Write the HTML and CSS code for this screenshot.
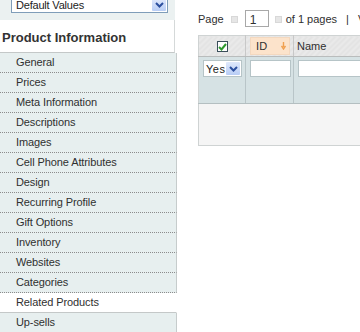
FILE: index.html
```html
<!DOCTYPE html>
<html lang="en">
<head>
  <meta charset="UTF-8" />
  <meta name="viewport" content="width=device-width, initial-scale=1" />
  <title>Related Products</title>
  <link rel="stylesheet" href="styles.css">
</head>
<body>

<div class="page">
  <div class="side-col">
    <div class="store-switcher">
      <div class="select-box wide">
        <span class="select-text">Default Values</span>
        <span class="select-btn"><svg width="9" height="6" viewBox="0 0 9 6"><path d="M1 1 L4.5 4.5 L8 1" fill="none" stroke="#2c4f9e" stroke-width="2"/></svg></span>
      </div>
    </div>

    <h3 class="tabs-title">Product Information</h3>

    <ul class="tabs">
      <li><a href="#">General</a></li>
      <li><a href="#">Prices</a></li>
      <li><a href="#">Meta Information</a></li>
      <li><a href="#">Descriptions</a></li>
      <li><a href="#">Images</a></li>
      <li><a href="#">Cell Phone Attributes</a></li>
      <li><a href="#">Design</a></li>
      <li><a href="#">Recurring Profile</a></li>
      <li><a href="#">Gift Options</a></li>
      <li><a href="#">Inventory</a></li>
      <li><a href="#">Websites</a></li>
      <li><a href="#">Categories</a></li>
      <li><a href="#" class="active">Related Products</a></li>
      <li><a href="#">Up-sells</a></li>
    </ul>
  </div>

  <div class="main-col">
    <div class="pager">
      <span>Page</span>
      <span class="pager-arrow first"></span>
      <span class="pager-input">1</span>
      <span class="pager-arrow"></span>
      <span class="pages">of 1 pages</span>
      <span class="sep">|</span>
      <span class="sep">View</span>
    </div>

    <table class="grid">
      <colgroup>
        <col class="col-check">
        <col class="col-id">
        <col class="col-name">
      </colgroup>
      <tr class="headings">
        <th class="center">
          <span class="check-box"><svg width="9" height="8" viewBox="0 0 9 8"><path d="M1 4 L3.5 6.5 L8 1" fill="none" stroke="#2e9a2e" stroke-width="2"/></svg></span>
        </th>
        <th>
          <span class="sort-cell">ID <svg class="sort-arrow" width="5" height="8" viewBox="0 0 5 8"><path d="M2.5 0 V5 M0.5 4 L2.5 7 L4.5 4" fill="none" stroke="#f0a050" stroke-width="1.4"/></svg></span>
        </th>
        <th><span class="head-text">Name</span></th>
      </tr>
      <tr class="filter">
        <td>
          <div class="select-box small">
            <span class="select-text">Yes</span>
            <span class="select-btn"><svg width="9" height="6" viewBox="0 0 9 6"><path d="M1 1 L4.5 4.5 L8 1" fill="none" stroke="#2c4f9e" stroke-width="2"/></svg></span>
          </div>
        </td>
        <td><span class="input-text"></span></td>
        <td><span class="input-text name"></span></td>
      </tr>
      <tr class="empty">
        <td colspan="3"></td>
      </tr>
    </table>
  </div>
</div>

</body>
</html>
```

FILE: styles.css
```css
body {
  margin: 0;
  font-family: "Liberation Sans", Arial, sans-serif;
  font-size: 11px;
  color: #2f2f2f;
  background: #fff;
}
.page {
  display: flex;
  width: 360px;
  height: 332px;
  overflow: hidden;
}
.side-col {
  flex: none;
  width: 177px;
}
.store-switcher {
  height: 20px;
  width: 175px;
  background: #ebf1f1;
  overflow: hidden;
}
.select-box {
  display: flex;
  align-items: center;
  background: #fff;
  border: 1px solid #7f9db9;
  box-sizing: border-box;
}
.select-box.wide {
  width: 157px;
  height: 16px;
  margin: -3px 0 0 11px;
}
.select-text {
  flex: 1;
  padding-left: 4px;
  font-size: 11px;
  color: #222;
}
.select-box.wide .select-text {
  letter-spacing: -0.2px;
}
.select-btn {
  display: flex;
  align-items: center;
  justify-content: center;
  width: 14px;
  align-self: stretch;
  margin: 1px;
  background: linear-gradient(#dfe8fb, #b8cdf5);
  border-radius: 1px;
}
.tabs-title {
  margin: 0;
  width: 175px;
  height: 33px;
  box-sizing: border-box;
  padding: 10px 0 0 2px;
  font-size: 13px;
  font-weight: bold;
  color: #333;
  border-right: 1px solid #d5d9d9;
  border-bottom: 1px solid #c4c8c8;
}
.tabs {
  list-style: none;
  margin: 0;
  padding: 0;
}
.tabs a {
  display: block;
  height: 19px;
  line-height: 19px;
  padding-left: 16px;
  background: #e7efef;
  border-bottom: 1px dotted #8c8c8c;
  border-right: 1px solid #c6cccc;
  color: #2f2f2f;
  text-decoration: none;
  font-size: 11px;
  letter-spacing: -0.1px;
}
.tabs a.active {
  background: #fff;
  border-right-color: #fff;
  border-bottom: 1px solid #c4c8c8;
}
.main-col {
  flex: 1;
  min-width: 0;
  overflow: hidden;
  padding: 10px 0 0 21px;
}
.pager {
  display: flex;
  align-items: center;
  height: 17px;
  white-space: nowrap;
}
.pager > span {
  flex: none;
}
.pager-arrow {
  width: 7px;
  height: 7px;
  margin: 1px 0 0 6px;
  background: #e6e6e6;
  border: 1px solid #d8d8d8;
  box-sizing: border-box;
}
.pager-arrow.first {
  margin-left: 7px;
}
.pager-input {
  width: 24px;
  height: 17px;
  margin-left: 7px;
  box-sizing: border-box;
  border: 1px solid #a8a8a8;
  padding: 2px 0 0 4px;
  font-size: 12px;
}
.pages {
  margin-left: 4px;
}
.sep {
  margin-left: 9px;
}
.grid {
  margin-top: 8px;
  border-collapse: collapse;
  table-layout: fixed;
  width: 420px;
  border: 1px solid #cfd3d3;
}
.col-check {
  width: 47px;
}
.col-id {
  width: 48px;
}
.col-name {
  width: 325px;
}
.headings th {
  height: 20px;
  padding: 0;
  text-align: left;
  font-weight: normal;
  background: repeating-linear-gradient(135deg, #e3e3e3 0 2px, #eaeaea 2px 4px);
  border-right: 1px solid #c8c8c8;
  border-bottom: 1px solid #b9bcbc;
}
.headings th.center {
  text-align: center;
}
.check-box {
  display: inline-flex;
  align-items: center;
  justify-content: center;
  width: 11px;
  height: 11px;
  box-sizing: border-box;
  border: 1px solid #3a4f5a;
  background: #fff;
  vertical-align: middle;
}
.sort-cell {
  display: flex;
  align-items: center;
  justify-content: space-between;
  margin: 1px 3px 1px 4px;
  height: 16px;
  padding: 0 3px 0 5px;
  background: #fce3cb;
  border: 1px solid #f3d8bf;
  letter-spacing: 0.3px;
}
.head-text {
  padding-left: 3px;
}
.filter td {
  height: 47px;
  padding: 3px 0 0 4px;
  vertical-align: top;
  box-sizing: border-box;
  background: #d6e2e4;
  border-right: 1px solid #b9c5c8;
  border-bottom: 1px solid #b4bfc1;
}
.select-box.small {
  width: 39px;
  height: 17px;
  border-color: #b6c4c7;
}
.select-box.small .select-text {
  padding-left: 2px;
  letter-spacing: 0.5px;
}
.input-text {
  display: block;
  width: 41px;
  height: 17px;
  box-sizing: border-box;
  background: #fff;
  border: 1px solid #b6c4c7;
}
.input-text.name {
  width: 300px;
}
.empty td {
  height: 39px;
  background: #f5f5f5;
  border-bottom: 1px solid #cfd3d3;
}
```
